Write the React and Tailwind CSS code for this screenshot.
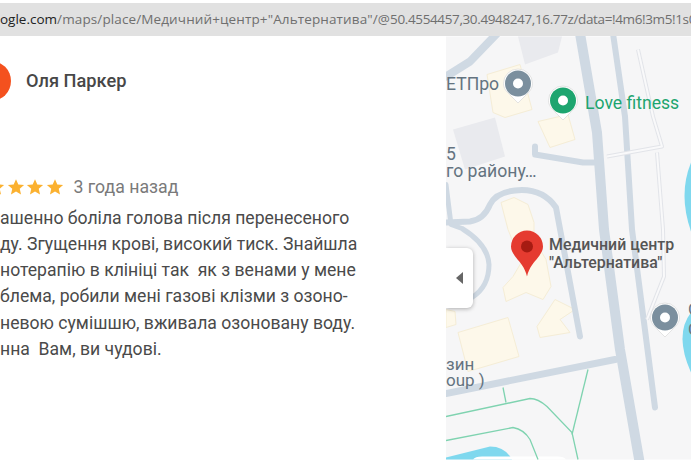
const road = "#cfd9e3"

function Pin({ x, y, ring }) {
  // round place marker with a white halo and a small tip, (x, y) = centre
  return (
    <g>
      <path d={`M${x - 14.5} ${y}a14.5 14.5 0 0 1 29 0c0 5 -3 8 -6 11l-8.5 8.5l-8.5 -8.5c-3 -3 -6 -6 -6 -11z`} fill="#fff" stroke="#d9d9d9" strokeWidth="0.7" />
      <circle cx={x} cy={y} r="13" fill={ring} />
      <circle cx={x} cy={y} r="5" fill="#fff" />
    </g>
  )
}

function MapDrawing() {
  return (
    <svg viewBox="446 37 245 423" className="block h-full w-full">
      <rect x="446" y="37" width="245" height="423" fill="#f6f6f7" />

      {/* water */}
      <path d="M691 163Q678 195 691 232z" fill="#7fd8ee" />
      <path d="M691 313Q674 335 691 373z" fill="#7fd8ee" />
      <path d="M446 460L446 458L490 447Q505 447 512 460z" fill="#7fd8ee" />
      <path d="M473 460Q475 457 482 457L558 457Q564 457 566 460z" fill="#fff" />

      {/* grey buildings */}
      <path d="M518 37L562 37L558 53L525 65z" fill="#e9eaee" />
      <path d="M453 130L495 118L505 157L465 170z" fill="#e9eaee" />

      {/* yellow buildings */}
      <g fill="#fdf8ea" stroke="#f5edd6" strokeWidth="1">
        <path d="M487 75L520 65L532 110L505 118L493 113z" />
        <path d="M538 122L568 115L575 140L550 148z" />
        <path d="M501 203L514 198L528 205L534 223L534 240L546 260L551 287L543 300L526 293L506 302L503 288L513 277L523 260L512 240L508 230z" />
        <path d="M537 327L555 300L575 310L560 320L570 333L540 338z" />
        <path d="M458 333L508 318L519 357L468 372z" />
        <path d="M446 310L455 312L456 325L446 328z" />
      </g>

      {/* roads */}
      <g fill="none" stroke={road} strokeLinecap="round" strokeLinejoin="round">
        <path d="M497 34L470 62L446 77" strokeWidth="8" />
        <path d="M580 34L597 133L604 230L620 350L640 465" strokeWidth="10" />
        <path d="M613 34L625 117L632 230L655 408" strokeWidth="6" />
        <path d="M535 147L535 155L583 163L600 163" strokeWidth="6" />
        <path d="M444 223L470 222Q484 220 490 205Q496 193 515 191Q542 188 556 208L580 337" strokeWidth="6" />
        <path d="M446 185L451 225L462 229Q488 245 489 265Q489 287 472 298" strokeWidth="5" />
        <path d="M446 394L615 360" strokeWidth="7" />
      </g>

      {/* thin service road */}
      <g fill="none" stroke="#e2e4e9" strokeWidth="4" strokeLinejoin="round">
        <path d="M638 50L653 117L662 147L607 157" />
        <path d="M657 153L663 230L664 277L647 320" />
      </g>
      <g fill="none" stroke="#f9f9fa" strokeWidth="2" strokeLinejoin="round">
        <path d="M638 50L653 117L662 147L607 157" />
        <path d="M657 153L663 230L664 277L647 320" />
      </g>

      {/* green paths */}
      <g fill="none" stroke="#7fd3b0" strokeWidth="1.3">
        <path d="M446 417L530 399Q538 399 547 407L572 433L578 460" />
        <path d="M503 388L506 403" />
        <path d="M588 370L572 435" />
        <path d="M446 441L513 428Q524 430 530 440L538 460" />
      </g>

      <Pin x={518} y={84} ring="#7b8f9e" />
      <Pin x={563} y={101} ring="#1da56f" />
      <Pin x={665} y={318} ring="#7b8f9e" />

      {/* red place pin */}
      <path d="M527 277C525 268 520 263 516 258C513 254 511 251 511 247a16 16 0 0 1 32 0c0 4 -2 7 -5 11C534 263 529 268 527 277z" fill="#e53b30" />
      <circle cx="527" cy="247" r="6" fill="#a61b12" />
    </svg>
  )
}

function Star() {
  return (
    <svg viewBox="0 0 24 24" className="h-[18px] w-[18px] shrink-0" fill="#fbb130">
      <path d="M12 1.5l3.1 7.1 7.7.7-5.8 5.1 1.7 7.6L12 18l-6.7 4 1.7-7.6L1.2 9.3l7.7-.7z" />
    </svg>
  )
}

const lines = [
  "ашенно боліла голова після перенесеного",
  "ду. Згущення крові, високий тиск. Знайшла",
  "нотерапію в клініці так  як з венами у мене",
  "блема, робили мені газові клізми з озоно-",
  "невою сумішшю, вживала озоновану воду.",
  "нна  Вам, ви чудові.",
]

export default function App() {
  return (
    <div className="flex h-[460px] w-[691px] flex-col overflow-hidden bg-white font-['Roboto',sans-serif]">
      {/* address bar */}
      <div className="mt-[3px] flex h-[33px] shrink-0 items-center overflow-hidden whitespace-nowrap bg-[#e1e1e1] font-['Open_Sans',sans-serif] text-[13.5px] text-[#6f6f6f]">
        <span className="text-[#222]">ogle.com</span>
        <span className="tracking-[0.12px]">/maps/place/Медичний+центр+"Альтернатива"/@</span>
        <span className="tracking-[-0.37px]">50.4554457,30.4948247,16.77z/data=!4m6!3m5!1s0</span>
      </div>

      <div className="relative flex min-h-0 flex-1">
        {/* review */}
        <div className="w-[446px] shrink-0 overflow-hidden">
          <div className="mt-[25px] flex items-center gap-[15px]">
            <div className="ml-[-29px] h-[40px] w-[40px] shrink-0 rounded-full bg-[#f4511e]" />
            <div className="text-[18.2px] font-medium text-[#474747]">Оля Паркер</div>
          </div>
          <div className="mt-[73px] flex items-center">
            <div className="ml-[-13px] flex gap-[1.5px]">
              <Star />
              <Star />
              <Star />
              <Star />
            </div>
            <span className="ml-[10px] text-[17.7px] text-[#7a7a7a]">3 года назад</span>
          </div>
          <div className="mt-[4px] whitespace-pre text-[17.6px] leading-[26.3px] text-[#4a4a4a]">
            {lines.map((l) => (
              <div key={l}>{l}</div>
            ))}
          </div>
        </div>

        {/* map */}
        <div className="relative min-w-0 flex-1 overflow-hidden">
          <MapDrawing />
          <div className="absolute left-0 top-[212px] flex h-[60px] w-[27px] items-center justify-center rounded-r-md bg-white shadow-[0_1px_4px_rgba(0,0,0,0.3)]">
            <div className="h-0 w-0 border-y-[6px] border-r-[7px] border-y-transparent border-r-[#666]" />
          </div>
          <div className="absolute left-0 top-[38px] text-[17.6px] leading-[20px] text-[#647380]">ЕТПро</div>
          <div className="absolute left-[139px] top-[57px] whitespace-nowrap text-[17.6px] leading-[20px] text-[#1da56f]">Love fitness</div>
          <div className="absolute left-0 top-[110px] text-[17.6px] leading-[17px] text-[#647380]">
            5<br />го району…
          </div>
          <div className="absolute left-[103px] top-[200px] whitespace-nowrap text-[15.9px] font-medium leading-[18px] text-[#555]">
            Медичний центр<br />"Альтернатива"
          </div>
          <div className="absolute left-0 top-[320px] text-[17px] leading-[16px] text-[#647380]">
            зин<br />oup )
          </div>
          <div className="absolute left-[242px] top-[263px] text-[17px] leading-[20px] text-[#647380]">
            О<br />С
          </div>
        </div>
      </div>
    </div>
  )
}
